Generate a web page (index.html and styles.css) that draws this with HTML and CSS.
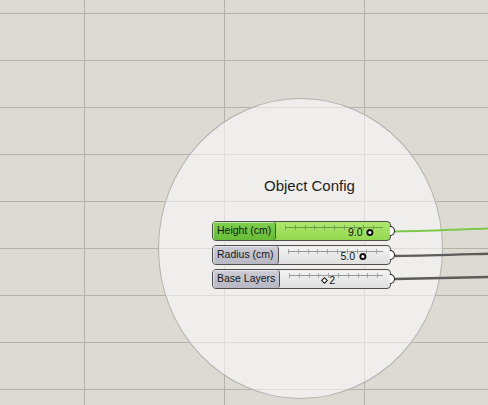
FILE: index.html
```html
<!DOCTYPE html>
<html lang="en">
<head>
    <meta charset="UTF-8">
    <meta name="viewport" content="width=device-width, initial-scale=1.0">
    <title>Object Config</title>
    <link rel="stylesheet" href="styles.css">
</head>
<body>
    <div class="canvas">
        <div class="group">
            <div class="group-title">Object Config</div>
            <div class="sliders">
                <div class="slider slider-active">
                    <div class="slider-box">
                        <div class="slider-label">Height (cm)</div>
                        <div class="slider-body">
                            <div class="slider-track"></div>
                            <div class="slider-knob knob-float" style="left: 82%">
                                <span class="slider-value">9.0</span>
                                <span class="handle-circle"></span>
                            </div>
                        </div>
                    </div>
                    <span class="slider-output"></span>
                </div>
                <div class="slider">
                    <div class="slider-box">
                        <div class="slider-label">Radius (cm)</div>
                        <div class="slider-body">
                            <div class="slider-track"></div>
                            <div class="slider-knob knob-float" style="left: 75%">
                                <span class="slider-value">5.0</span>
                                <span class="handle-circle"></span>
                            </div>
                        </div>
                    </div>
                    <span class="slider-output"></span>
                </div>
                <div class="slider">
                    <div class="slider-box">
                        <div class="slider-label">Base Layers</div>
                        <div class="slider-body">
                            <div class="slider-track"></div>
                            <div class="slider-knob knob-int" style="left: 41%">
                                <span class="handle-diamond"></span>
                                <span class="slider-value">2</span>
                            </div>
                        </div>
                    </div>
                    <span class="slider-output"></span>
                </div>
            </div>
        </div>

        <!-- wires leaving the outputs -->
        <svg class="wires" width="488" height="405" viewBox="0 0 488 405">
            <path d="M395 231.5 C 430 231, 460 229.5, 488 228.5" stroke="#7dc84a" stroke-width="2" fill="none"/>
            <path d="M395 256 C 430 255.5, 460 254.5, 488 253.7" stroke="#5c5c5a" stroke-width="2.4" fill="none"/>
            <path d="M395 279 C 430 278.5, 460 277.5, 488 277" stroke="#5c5c5a" stroke-width="2.4" fill="none"/>
        </svg>
    </div>
</body>
</html>
```

FILE: styles.css
```css
body {
    margin: 0;
    font-family: "Liberation Sans", Arial, sans-serif;
}
.canvas {
    position: relative;
    width: 488px;
    height: 405px;
    overflow: hidden;
    background-color: #dddad4;
    background-image:
        linear-gradient(to right, #b5b2ac 1px, transparent 1px),
        linear-gradient(to bottom, #b5b2ac 1px, transparent 1px);
    background-size: 140px 47px, 140px 47px;
    background-position: 84px 0, 0 13px;
}

/* group bubble */
.group {
    position: absolute;
    left: 158px;
    top: 98px;
    width: 285px;
    height: 301px;
    box-sizing: border-box;
    border: 1px solid #b3b1ac;
    border-radius: 50%;
    background: rgba(255, 255, 255, 0.55);
    display: flex;
    flex-direction: column;
    align-items: flex-start;
    padding: 78px 0 0 53px;
}
.group-title {
    font-size: 15px;
    line-height: 18px;
    color: #1c1c1c;
    padding-left: 52px;
}
.sliders {
    margin-top: 26px;
    display: flex;
    flex-direction: column;
    gap: 4.5px;
}

/* number slider */
.slider {
    display: flex;
    align-items: center;
}
.slider-box {
    display: flex;
    width: 179px;
    height: 19.5px;
    box-sizing: border-box;
    border: 1px solid #4e4e4e;
    border-radius: 4px;
    overflow: hidden;
    background: linear-gradient(to bottom, #f3f3f3, #e0e0e0);
}
.slider-label {
    flex: none;
    padding: 0 4px;
    font-size: 10.5px;
    line-height: 17.5px;
    color: #151515;
    border-right: 1px solid #4e4e4e;
    border-radius: 0 3px 3px 0;
    background: linear-gradient(to bottom, #cdcdd7, #b8b8c4);
    box-shadow: inset 1px 1px 0 rgba(255, 255, 255, 0.5);
}
.slider-body {
    position: relative;
    flex: 1;
}
.slider-track {
    position: absolute;
    left: 9px;
    right: 7px;
    top: 2.5px;
    height: 5px;
    background-image:
        linear-gradient(to bottom, transparent 2px, #9a9a9a 2px, #9a9a9a 3px, transparent 3px),
        repeating-linear-gradient(to right, #a8a8a8 0, #a8a8a8 1px, transparent 1px, transparent 9.8px);
}
.slider-knob {
    position: absolute;
    top: 0;
    height: 17.5px;
    display: flex;
    align-items: center;
    gap: 4px;
    padding-top: 3px;
    box-sizing: border-box;
}
.knob-float {
    transform: translateX(calc(-100% + 4px));
}
.knob-int {
    transform: translateX(-4px);
    gap: 1px;
}
.slider-value {
    font-size: 10.5px;
    line-height: 12px;
    color: #111;
}
.handle-circle {
    width: 7px;
    height: 7px;
    box-sizing: border-box;
    border: 2px solid #111;
    border-radius: 50%;
    background: #fff;
}
.handle-diamond {
    width: 5px;
    height: 5px;
    margin: 0 1px;
    box-sizing: border-box;
    border: 1.5px solid #111;
    background: #fff;
    transform: rotate(45deg);
}
.slider-output {
    width: 4px;
    height: 8px;
    margin-left: -1px;
    border: 1.5px solid #111;
    border-left: none;
    border-radius: 0 5px 5px 0;
    background: #fff;
}

/* selected slider is green */
.slider-active .slider-box {
    background: linear-gradient(to bottom, #aee86d, #93d850);
}
.slider-active .slider-label {
    background: linear-gradient(to bottom, #7fd04a, #67bd35);
}
.slider-active .slider-track {
    background-image:
        linear-gradient(to bottom, transparent 2px, #6c9f4a 2px, #6c9f4a 3px, transparent 3px),
        repeating-linear-gradient(to right, #78a856 0, #78a856 1px, transparent 1px, transparent 9.8px);
}

.wires {
    position: absolute;
    left: 0;
    top: 0;
    pointer-events: none;
}
```
